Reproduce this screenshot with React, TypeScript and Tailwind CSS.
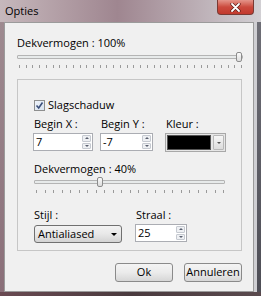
import React from "react";

const font = { fontFamily: '"Open Sans", "Noto Sans", sans-serif' };

function Ticks({ width, count }: { width: number; count: number }) {
  const xs: number[] = [];
  for (let i = 0; i < count; i++) xs.push(Math.round(2 + (i * (width - 4)) / (count - 1)) + 0.5);
  return (
    <svg width={width} height={3} className="block">
      {xs.map((x, i) => (
        <line key={i} x1={x} x2={x} y1={0} y2={3} stroke="#9a9a9a" strokeWidth={1} />
      ))}
    </svg>
  );
}

function Slider({ width, thumb, count }: { width: number; thumb: number; count: number }) {
  return (
    <div className="flex flex-col" style={{ width }}>
      <div className="relative h-[10px]">
        <div className="absolute left-0 right-0 top-[3px] h-[4px] border border-[#b4b4b4] bg-[#e7eaea] rounded-[1px]" />
        <div
          className="absolute top-0 h-[10px] w-[6px] rounded-[2px] border border-[#8c8c8c] bg-gradient-to-b from-[#fbfbfb] to-[#dcdcdc]"
          style={{ left: thumb }}
        />
      </div>
      <div className="mt-[3px]">
        <Ticks width={width} count={count} />
      </div>
    </div>
  );
}

function SpinBox({ value, width }: { value: string; width: number }) {
  return (
    <div
      className="flex h-[18px] items-stretch border border-[#abadb3] bg-white"
      style={{ width }}
    >
      <div className="flex-1 pl-[2px] text-[11px] leading-[16px] text-black">{value}</div>
      <div className="flex w-[11px] flex-col gap-[1px] p-[1px]">
        <div className="flex flex-1 items-center justify-center rounded-[1px] border border-[#c5c9d0] bg-[#eef0f3]">
          <div className="h-0 w-0 border-x-[2px] border-b-[2px] border-x-transparent border-b-[#5a6070]" />
        </div>
        <div className="flex flex-1 items-center justify-center rounded-[1px] border border-[#c5c9d0] bg-[#eef0f3]">
          <div className="h-0 w-0 border-x-[2px] border-t-[2px] border-x-transparent border-t-[#5a6070]" />
        </div>
      </div>
    </div>
  );
}

function Button({ label, width }: { label: string; width: number }) {
  return (
    <div
      className="flex h-[19px] items-center justify-center rounded-[3px] border border-[#8a8a8a] bg-gradient-to-b from-[#f4f4f4] via-[#ebebeb] to-[#d6d6d6] text-[11px] text-black"
      style={{ width }}
    >
      {label}
    </div>
  );
}

export default function App() {
  return (
    <div
      className="relative flex h-[296px] w-[261px] flex-col overflow-hidden bg-gradient-to-r from-[#c4b2b8] via-[#9c8089] to-[#d2d0d4]"
      style={font}
    >
      {/* Title bar */}
      <div className="flex h-[22px] items-center justify-between bg-gradient-to-r from-[#c6b8bc] via-[#9f8690] via-45% to-[#d2d0d4] pl-[5px] pr-[7px]">
        <span className="text-[11px] text-black">Opties</span>
        <div className="mb-[7px] flex h-[15px] w-[37px] items-center justify-center rounded-b-[4px] border border-t-0 border-[#7a3a34] bg-gradient-to-b from-[#e4948a] via-[#cb4a3e] to-[#c23a2e]">
          <svg width="11" height="9" viewBox="0 0 11 9">
            <path d="M2 1 L9 8 M9 1 L2 8" stroke="#5a1a16" strokeWidth="3.2" strokeLinecap="round" />
            <path d="M2 1 L9 8 M9 1 L2 8" stroke="#ffffff" strokeWidth="1.8" strokeLinecap="round" />
          </svg>
        </div>
      </div>

      {/* Body row */}
      <div className="flex flex-1">
        <div className="w-[4px] bg-gradient-to-b from-[#9e8a90] to-[#8a6f79]" />
        <div className="flex w-[250px] flex-col border border-[#9b9b9b] bg-[#f0f0f0] pl-[12px]">
          {/* Top opacity */}
          <div className="mt-[13px] text-[11px] leading-[14px] text-black">Dekvermogen : 100%</div>
          <div className="mt-[2px]">
            <Slider width={226} thumb={219} count={34} />
          </div>

          {/* Group */}
          <div className="mt-[11px] flex h-[172px] w-[225px] flex-col border border-[#c6c6c6] pl-[16px]">
            <div className="mt-[18px] flex items-center gap-[3px]">
              <div className="flex h-[11px] w-[11px] items-center justify-center border border-[#8e8f8f] bg-gradient-to-br from-[#eef3fa] to-[#d8e2ee]">
                <svg width="9" height="9" viewBox="0 0 9 9">
                  <path d="M1.5 4.5 L3.7 7 L7.5 1.5" fill="none" stroke="#3a4e7a" strokeWidth="1.6" />
                </svg>
              </div>
              <span className="text-[11px] leading-[14px] text-black">Slagschaduw</span>
            </div>

            <div className="mt-[5px] flex">
              <div className="flex w-[67px] flex-col">
                <span className="text-[11px] leading-[14px] text-black">Begin X :</span>
                <div className="mt-[2px] -ml-[1px]">
                  <SpinBox value="7" width={60} />
                </div>
              </div>
              <div className="flex w-[65px] flex-col">
                <span className="text-[11px] leading-[14px] text-black">Begin Y :</span>
                <div className="mt-[2px] -ml-[1px]">
                  <SpinBox value="-7" width={53} />
                </div>
              </div>
              <div className="flex flex-col">
                <span className="text-[11px] leading-[14px] text-black">Kleur :</span>
                <div className="mt-[2px] -ml-[1px] flex h-[19px] w-[61px] items-center gap-[2px] border border-[#a8a8a8] bg-[#e6e6e6] p-[1px]">
                  <div className="h-full w-[44px] border border-[#555] bg-black" />
                  <div className="flex h-full w-[11px] items-center justify-center rounded-[1px] border border-[#b8b8b8] bg-gradient-to-b from-[#f6f6f6] to-[#dcdcdc]">
                    <div className="h-0 w-0 border-x-[2px] border-t-[2px] border-x-transparent border-t-[#555]" />
                  </div>
                </div>
              </div>
            </div>

            <div className="mt-[10px] text-[11px] leading-[14px] text-black">Dekvermogen : 40%</div>
            <div className="mt-[1px]">
              <Slider width={191} thumb={63} count={23} />
            </div>

            <div className="mt-[15px] flex">
              <div className="flex w-[102px] flex-col">
                <span className="text-[11px] leading-[14px] text-black">Stijl :</span>
                <div className="mt-[3px] flex h-[18px] w-[88px] items-center justify-between rounded-[3px] border border-[#707070] bg-gradient-to-b from-[#f3f3f3] via-[#e8e8e8] to-[#d3d3d3] pl-[3px] pr-[4px]">
                  <span className="text-[11px] text-black">Antialiased</span>
                  <div className="h-0 w-0 border-x-[3px] border-t-[3px] border-x-transparent border-t-black" />
                </div>
              </div>
              <div className="flex flex-col">
                <span className="text-[11px] leading-[14px] text-black">Straal :</span>
                <div className="mt-[2px] -ml-[1px]">
                  <SpinBox value="25" width={52} />
                </div>
              </div>
            </div>
          </div>

          {/* Buttons */}
          <div className="mt-[12px] flex w-[225px] justify-end gap-[11px]">
            <Button label="Ok" width={58} />
            <Button label="Annuleren" width={58} />
          </div>
        </div>
        <div className="flex w-[7px]">
          <div className="w-[3px] bg-[#cfcfd3]" />
          <div className="w-[4px] bg-gradient-to-b from-[#6e6e76] to-[#4e4e56]" />
        </div>
      </div>
      <div className="h-[4px] bg-gradient-to-r from-[#6a4a52] via-[#4a3a3e] to-[#5a4a4e]" />
    </div>
  );
}
